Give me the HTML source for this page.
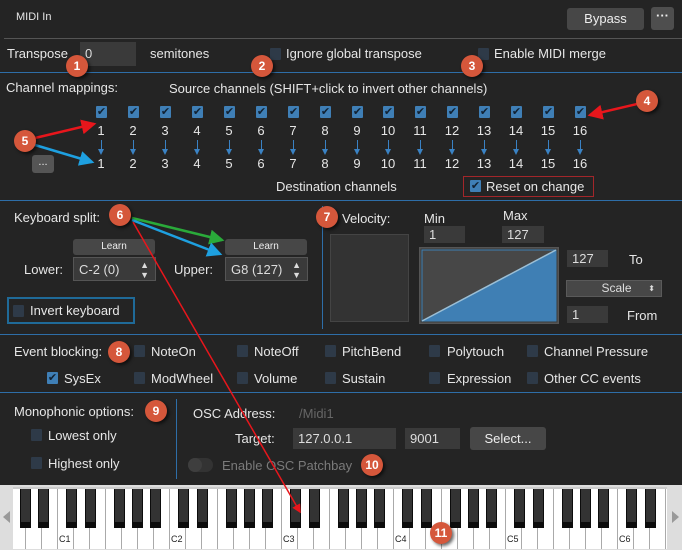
<!DOCTYPE html>
<html><head><meta charset="utf-8"><style>
*{margin:0;padding:0;box-sizing:border-box}
body{width:682px;height:550px;background:#242424;position:relative;overflow:hidden;font-family:"Liberation Sans","DejaVu Sans",sans-serif;color:#e6e6e6;font-size:13px}
.a{position:absolute;white-space:nowrap}
.hl{position:absolute;height:1px;background:#2e6ea8;left:0;width:682px}
.vl{position:absolute;width:1px;background:#2e6ea8}
.in{position:absolute;background:#3a3a3a;color:#ddd;font-size:13px;padding-left:5px;line-height:17px}
.cb{position:absolute;width:11px;height:12px;background:#2e3a48;border-radius:1px}
.ck{position:absolute;width:11px;height:12px;background:#3f7fb6;border-radius:1px;color:#123;font-size:11px;font-weight:bold;line-height:12px;text-align:center}
.btn{position:absolute;background:#474747;border-radius:3px;color:#eee;text-align:center}
.bd{position:absolute;width:22px;height:22px;border-radius:50%;background:#d5573b;color:#fff;font-weight:bold;font-size:12px;line-height:22px;text-align:center;box-shadow:2px 2px 3px rgba(0,0,0,.6)}
.n{position:absolute;width:24px;text-align:center;font-size:13px}
</style></head><body>
<div class="a" style="left:16px;top:11px;font-size:11px">MIDI In</div>
<div class="btn" style="left:567px;top:8px;width:77px;height:22px;line-height:22px;font-size:13px">Bypass</div>
<div class="btn" style="left:651px;top:7px;width:23px;height:23px;line-height:18px;font-weight:bold;background:#4e4e4e">···</div>
<div style="position:absolute;left:4px;top:38px;width:678px;height:1px;background:#555"></div>

<div class="a" style="left:7px;top:46px">Transpose</div>
<div class="in" style="left:80px;top:42px;width:56px;height:24px;line-height:24px">0</div>
<div class="a" style="left:150px;top:46px">semitones</div>
<div class="cb" style="left:270px;top:48px"></div><div class="a" style="left:286px;top:46px">Ignore global transpose</div>
<div class="cb" style="left:478px;top:48px"></div><div class="a" style="left:494px;top:46px">Enable MIDI merge</div>
<div class="hl" style="top:72px"></div>

<div class="a" style="left:6px;top:80px">Channel mappings:</div>
<div class="a" style="left:169px;top:81px">Source channels (SHIFT+click to invert other channels)</div>
<div class="btn" style="left:32px;top:155px;width:22px;height:18px;line-height:14px;font-size:11px;background:#555">...</div>

<div id="ch"></div>
<script>
var h='';for(var i=0;i<16;i++){var x=101+32*i-(i>=9?1:0);
h+='<div class="ck" style="left:'+(x-5)+'px;top:106px">&#10004;</div>';
h+='<div class="n" style="left:'+(x-12)+'px;top:123px">'+(i+1)+'</div>';
h+='<div style="position:absolute;left:'+x+'px;top:140px;width:1px;height:10px;background:#3a82c4"></div><div style="position:absolute;left:'+(x-3)+'px;top:149px;border-left:3.5px solid transparent;border-right:3.5px solid transparent;border-top:6px solid #3a82c4"></div>';
h+='<div class="n" style="left:'+(x-12)+'px;top:156px">'+(i+1)+'</div>';}
document.getElementById('ch').innerHTML=h;
</script>
<div class="a" style="left:276px;top:179px">Destination channels</div>
<div style="position:absolute;left:463px;top:176px;width:131px;height:21px;border:1.5px solid #a3262a"></div>
<div class="ck" style="left:470px;top:180px">&#10004;</div><div class="a" style="left:486px;top:179px">Reset on change</div>
<div class="hl" style="top:200px"></div>

<div class="a" style="left:14px;top:210px">Keyboard split:</div>
<div class="btn" style="left:73px;top:239px;width:82px;height:16px;line-height:16px;font-size:10px">Learn</div>
<div class="btn" style="left:225px;top:239px;width:82px;height:16px;line-height:16px;font-size:10px">Learn</div>
<div class="a" style="left:24px;top:262px">Lower:</div>
<div class="in" style="left:73px;top:257px;width:83px;height:24px;line-height:24px;border:1px solid #555;background:#3a3a3a">C-2 (0)<span style="position:absolute;right:6px;font-size:9px;line-height:10px;top:2px">▲<br>▼</span></div>
<div class="a" style="left:174px;top:262px">Upper:</div>
<div class="in" style="left:225px;top:257px;width:83px;height:24px;line-height:24px;border:1px solid #555">G8 (127)<span style="position:absolute;right:6px;font-size:9px;line-height:10px;top:2px">▲<br>▼</span></div>
<div style="position:absolute;left:7px;top:297px;width:128px;height:27px;border:2px solid #1f6a98"></div>
<div class="cb" style="left:13px;top:305px"></div><div class="a" style="left:30px;top:303px">Invert keyboard</div>
<div class="vl" style="left:322px;top:206px;height:123px"></div>

<div class="a" style="left:342px;top:211px">Velocity:</div>
<div class="a" style="left:424px;top:211px">Min</div><div class="a" style="left:503px;top:208px">Max</div>
<div class="in" style="left:424px;top:226px;width:41px;height:17px">1</div>
<div class="in" style="left:502px;top:226px;width:42px;height:17px">127</div>
<div style="position:absolute;left:330px;top:234px;width:79px;height:88px;background:#333;border:1px solid #444"></div>
<svg style="position:absolute;left:419px;top:247px" width="140" height="77"><rect x="0.5" y="0.5" width="139" height="76" fill="#3c3c3c" stroke="#555" stroke-width="2"/><rect x="3" y="3" width="134" height="71" fill="#474747" stroke="#3d7fb3"/><polygon points="3,74 137,3 137,74" fill="#3f7fb4"/><line x1="3" y1="74" x2="137" y2="3" stroke="#9bbfd6" stroke-width="1.5"/></svg>
<div class="in" style="left:567px;top:250px;width:41px;height:17px">127</div><div class="a" style="left:629px;top:252px">To</div>
<div class="in" style="left:566px;top:280px;width:96px;height:17px;background:#474747;border:1px solid #5a5a5a;text-align:center;font-size:12px;line-height:15px">Scale<span style="position:absolute;right:6px;font-size:8px">⬍</span></div>
<div class="in" style="left:567px;top:306px;width:41px;height:17px">1</div><div class="a" style="left:627px;top:308px">From</div>
<div class="hl" style="top:334px"></div>

<div class="a" style="left:14px;top:344px">Event blocking:</div>
<div class="cb" style="left:134px;top:345px"></div><div class="a" style="left:151px;top:344px">NoteOn</div>
<div class="cb" style="left:237px;top:345px"></div><div class="a" style="left:254px;top:344px">NoteOff</div>
<div class="cb" style="left:325px;top:345px"></div><div class="a" style="left:342px;top:344px">PitchBend</div>
<div class="cb" style="left:429px;top:345px"></div><div class="a" style="left:447px;top:344px">Polytouch</div>
<div class="cb" style="left:527px;top:345px"></div><div class="a" style="left:544px;top:344px">Channel Pressure</div>
<div class="ck" style="left:47px;top:372px">&#10004;</div><div class="a" style="left:64px;top:371px">SysEx</div>
<div class="cb" style="left:134px;top:372px"></div><div class="a" style="left:151px;top:371px">ModWheel</div>
<div class="cb" style="left:237px;top:372px"></div><div class="a" style="left:254px;top:371px">Volume</div>
<div class="cb" style="left:325px;top:372px"></div><div class="a" style="left:342px;top:371px">Sustain</div>
<div class="cb" style="left:429px;top:372px"></div><div class="a" style="left:447px;top:371px">Expression</div>
<div class="cb" style="left:527px;top:372px"></div><div class="a" style="left:544px;top:371px">Other CC events</div>
<div class="hl" style="top:392px"></div>

<div class="a" style="left:14px;top:404px">Monophonic options:</div>
<div class="cb" style="left:31px;top:429px"></div><div class="a" style="left:48px;top:428px">Lowest only</div>
<div class="cb" style="left:31px;top:457px"></div><div class="a" style="left:48px;top:456px">Highest only</div>
<div class="vl" style="left:176px;top:399px;height:80px"></div>
<div class="a" style="left:193px;top:406px">OSC Address:</div><div class="a" style="left:299px;top:406px;color:#666">/Midi1</div>
<div class="a" style="left:235px;top:431px">Target:</div>
<div class="in" style="left:293px;top:428px;width:103px;height:21px;line-height:21px">127.0.0.1</div>
<div class="in" style="left:405px;top:428px;width:55px;height:21px;line-height:21px">9001</div>
<div class="btn" style="left:470px;top:427px;width:76px;height:23px;line-height:23px">Select...</div>
<div style="position:absolute;left:188px;top:458px;width:25px;height:14px;border-radius:7px;background:#333"></div><div style="position:absolute;left:188px;top:458px;width:14px;height:14px;border-radius:50%;background:#3e3e3e"></div>
<div class="a" style="left:222px;top:458px;color:#7a7a7a">Enable OSC Patchbay</div>

<svg style="position:absolute;left:0;top:485px" width="682" height="65">
<defs><pattern id="kb" x="57" y="2" width="112" height="62" patternUnits="userSpaceOnUse">
<rect width="112" height="62" fill="#fff"/>
<g fill="#aaa"><rect x="0" width="1" height="62"/><rect x="16" width="1" height="62"/><rect x="32" width="1" height="62"/><rect x="48" width="1" height="62"/><rect x="64" width="1" height="62"/><rect x="80" width="1" height="62"/><rect x="96" width="1" height="62"/></g>
<g fill="#0c0c0c"><rect x="9" width="11" height="41"/><rect x="28" width="11" height="41"/><rect x="57" width="11" height="41"/><rect x="75" width="11" height="41"/><rect x="93" width="11" height="41"/></g>
<g fill="#333"><rect x="10" width="9" height="35"/><rect x="29" width="9" height="35"/><rect x="58" width="9" height="35"/><rect x="76" width="9" height="35"/><rect x="94" width="9" height="35"/></g>
</pattern></defs>
<rect x="0" y="0" width="682" height="65" fill="#ddd"/>
<rect x="13" y="2" width="654" height="62" fill="url(#kb)"/>
<rect x="13" y="2" width="654" height="2" fill="#ccc"/>
<polygon points="3,32 10,26 10,38" fill="#999"/><polygon points="679,32 672,26 672,38" fill="#999"/>
<g font-size="9" fill="#222" font-family="Liberation Sans"><text x="59" y="57">C1</text><text x="171" y="57">C2</text><text x="283" y="57">C3</text><text x="395" y="57">C4</text><text x="507" y="57">C5</text><text x="619" y="57">C6</text></g>
</svg>

<svg style="position:absolute;left:0;top:0" width="682" height="550">
<defs>
<marker id="mr" markerWidth="6" markerHeight="6" refX="5" refY="3" orient="auto" markerUnits="strokeWidth"><path d="M0,0 L6,3 L0,6z" fill="#e8161c"/></marker>
<marker id="mb" markerWidth="6" markerHeight="6" refX="5" refY="3" orient="auto" markerUnits="strokeWidth"><path d="M0,0 L6,3 L0,6z" fill="#1ea0e0"/></marker>
<marker id="mg" markerWidth="6" markerHeight="6" refX="5" refY="3" orient="auto" markerUnits="strokeWidth"><path d="M0,0 L6,3 L0,6z" fill="#2aaa3a"/></marker>
</defs>
<line x1="35" y1="138" x2="94" y2="124" stroke="#e8161c" stroke-width="2.5" marker-end="url(#mr)"/>
<line x1="35" y1="145" x2="92" y2="162" stroke="#1ea0e0" stroke-width="2.5" marker-end="url(#mb)"/>
<line x1="637" y1="104" x2="590" y2="115" stroke="#e8161c" stroke-width="2.5" marker-end="url(#mr)"/>
<line x1="132" y1="218" x2="222" y2="240" stroke="#2aaa3a" stroke-width="2.5" marker-end="url(#mg)"/>
<line x1="132" y1="220" x2="220" y2="254" stroke="#1ea0e0" stroke-width="2.5" marker-end="url(#mb)"/>
<line x1="133" y1="222" x2="300" y2="512" stroke="#e8161c" stroke-width="1.5" marker-end="url(#mr)"/>
</svg>

<div class="bd" style="left:66px;top:55px">1</div>
<div class="bd" style="left:251px;top:55px">2</div>
<div class="bd" style="left:461px;top:55px">3</div>
<div class="bd" style="left:636px;top:90px">4</div>
<div class="bd" style="left:14px;top:130px">5</div>
<div class="bd" style="left:109px;top:204px">6</div>
<div class="bd" style="left:316px;top:206px">7</div>
<div class="bd" style="left:108px;top:341px">8</div>
<div class="bd" style="left:145px;top:400px">9</div>
<div class="bd" style="left:361px;top:454px">10</div>
<div class="bd" style="left:430px;top:522px">11</div>
</body></html>
